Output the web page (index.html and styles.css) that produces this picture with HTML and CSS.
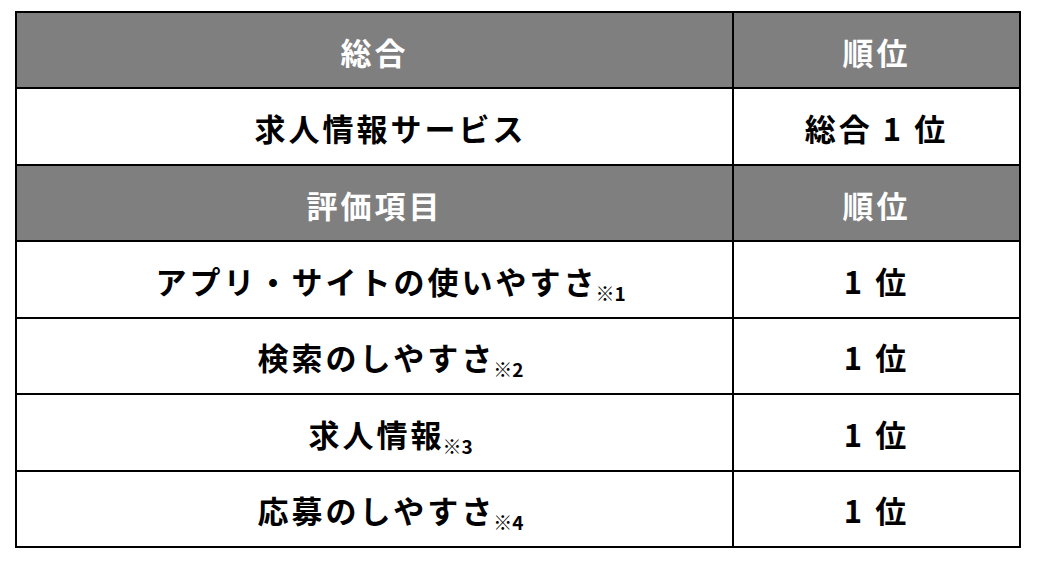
FILE: index.html
```html
<!DOCTYPE html>
<html lang="ja">
<head>
<meta charset="utf-8">
<link rel="stylesheet" href="styles.css">
</head>
<body>
<div class="table">
  <div class="cell head">総合</div>
  <div class="cell head">順位</div>
  <div class="cell item">求人情報サービス</div>
  <div class="cell">総合 1 位</div>
  <div class="cell head">評価項目</div>
  <div class="cell head">順位</div>
  <div class="cell item">アプリ・サイトの使いやすさ<span class="note">※1</span></div>
  <div class="cell">1 位</div>
  <div class="cell item">検索のしやすさ<span class="note">※2</span></div>
  <div class="cell">1 位</div>
  <div class="cell item">求人情報<span class="note">※3</span></div>
  <div class="cell">1 位</div>
  <div class="cell item">応募のしやすさ<span class="note">※4</span></div>
  <div class="cell">1 位</div>
</div>
</body>
</html>
```
FILE: styles.css
```css
html, body {
  margin: 0;
  padding: 0;
  background: #ffffff;
}
body {
  padding: 11px 0 0 15px;
  font-family: "Noto Sans CJK JP", "Noto Sans", sans-serif;
}
.table {
  width: 1006px;
  height: 537px;
  box-sizing: border-box;
  display: grid;
  grid-template-columns: 715px 285px;
  grid-template-rows: repeat(7, 1fr);
  gap: 2px;
  padding: 2px;
  background: #000000;
}
.cell {
  background: #ffffff;
  color: #000000;
  display: flex;
  align-items: center;
  justify-content: center;
  font-size: 31px;
  font-weight: 700;
  letter-spacing: 3px;
  line-height: 1;
  padding-top: 2px;
}
.cell.item {
  padding-left: 32px;
}
.cell.head {
  background: #7f7f7f;
  color: #ffffff;
}
.note {
  font-size: 19px;
  letter-spacing: 0;
  position: relative;
  top: 12px;
  margin-left: -2px;
}
```
